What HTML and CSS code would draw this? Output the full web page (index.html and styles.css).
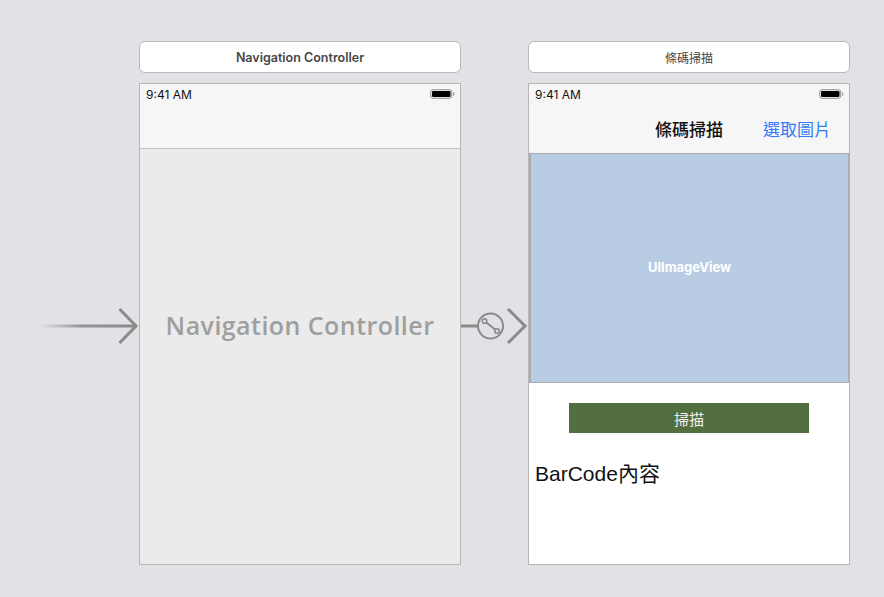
FILE: index.html
```html
<!DOCTYPE html>
<html>
<head>
<meta charset="utf-8">
<link rel="stylesheet" href="styles.css">
</head>
<body>
<div class="canvas">
  <div class="title bold col2">Navigation Controller</div>
  <div class="title col4">條碼掃描</div>

  <svg class="arrow col1" width="139" height="40" viewBox="0 0 139 40">
    <defs>
      <linearGradient id="fade" x1="0" x2="1" y1="0" y2="0">
        <stop offset="0" stop-color="#8a8a8a" stop-opacity="0"/>
        <stop offset="0.45" stop-color="#8a8a8a" stop-opacity="0.9"/>
        <stop offset="1" stop-color="#8a8a8a"/>
      </linearGradient>
    </defs>
    <rect x="40" y="19.5" width="95" height="3" fill="url(#fade)"/>
    <polyline points="119.5,4 136,21 119.5,38" fill="none" stroke="#8a8a8a" stroke-width="3"/>
  </svg>

  <div class="phone nav-phone col2">
    <div class="bar">
      <div class="status">
        <span>9:41 AM</span>
        <svg class="battery" width="25" height="10" viewBox="0 0 25 10"><rect x="0.75" y="0.75" width="21" height="8.5" rx="2.2" fill="none" stroke="#8c8c8c" stroke-width="1"/><rect x="2" y="2" width="18.5" height="6" rx="1.2" fill="#000"/><rect x="23" y="3.5" width="1.2" height="3" fill="#9a9a9a"/></svg>
      </div>
      <div class="navrow"></div>
    </div>
    <div class="nav-body">
      <div class="big-label">Navigation Controller</div>
    </div>
  </div>

  <svg class="arrow col3" width="67" height="40" viewBox="0 0 67 40">
    <line x1="0" y1="21" x2="17" y2="21" stroke="#8a8a8a" stroke-width="3"/>
    <circle cx="29.5" cy="21" r="12.5" fill="none" stroke="#8a8a8a" stroke-width="2"/>
    <line x1="23.5" y1="16" x2="36" y2="26" stroke="#8a8a8a" stroke-width="1.8"/>
    <circle cx="23.5" cy="16" r="2.3" fill="#e1e2e6" stroke="#8a8a8a" stroke-width="1.6"/>
    <circle cx="36" cy="26" r="2.3" fill="#e1e2e6" stroke="#8a8a8a" stroke-width="1.6"/>
    <polyline points="47,4 64,21 47,38" fill="none" stroke="#8a8a8a" stroke-width="3"/>
  </svg>

  <div class="phone scan-phone col4">
    <div class="bar">
      <div class="status">
        <span>9:41 AM</span>
        <svg class="battery" width="25" height="10" viewBox="0 0 25 10"><rect x="0.75" y="0.75" width="21" height="8.5" rx="2.2" fill="none" stroke="#8c8c8c" stroke-width="1"/><rect x="2" y="2" width="18.5" height="6" rx="1.2" fill="#000"/><rect x="23" y="3.5" width="1.2" height="3" fill="#9a9a9a"/></svg>
      </div>
      <div class="navrow scan-nav">
        <span class="nav-title">條碼掃描</span>
        <span class="nav-action">選取圖片</span>
      </div>
    </div>
    <div class="image-view">UIImageView</div>
    <div class="scan-body">
      <div class="scan-btn">掃描</div>
      <div class="barcode">BarCode內容</div>
    </div>
  </div>
</div>
</body>
</html>
```

FILE: styles.css
```css
html, body {
  margin: 0;
  padding: 0;
  background: #e1e2e6;
  font-family: "Inter", "Liberation Sans", "Noto Sans CJK TC", sans-serif;
}

.canvas {
  display: grid;
  grid-template-columns: 139px 322px 67px 322px;
  grid-template-rows: 32px 482px;
  row-gap: 10px;
  padding-top: 41px;
}

.col1 { grid-column: 1; }
.col2 { grid-column: 2; }
.col3 { grid-column: 3; }
.col4 { grid-column: 4; }

.title {
  grid-row: 1;
  box-sizing: border-box;
  background: #ffffff;
  border: 1px solid #b9b9bb;
  border-radius: 6px;
  display: flex;
  align-items: center;
  justify-content: center;
  font-size: 12px;
  color: #444444;
  font-family: "Inter", "Liberation Sans", "Noto Sans CJK TC", sans-serif;
}

.title.bold {
  font-weight: 600;
  font-size: 12.5px;
  color: #474747;
}

.arrow {
  grid-row: 2;
  align-self: center;
  margin-top: 2px;
  display: block;
}

.phone {
  grid-row: 2;
  box-sizing: border-box;
  border: 1px solid #b6b6b6;
  display: flex;
  flex-direction: column;
  overflow: hidden;
}

.nav-phone { background: #ebebeb; }
.scan-phone { background: #ffffff; }

.bar {
  background: #f6f6f6;
  display: flex;
  flex-direction: column;
}

.status {
  height: 20px;
  display: flex;
  align-items: center;
  justify-content: space-between;
  padding: 0 5px 0 6px;
  font-size: 12px;
  color: #111111;
  box-sizing: border-box;
}

.status span {
  padding-top: 1px;
}

.battery { display: block; }

.navrow {
  height: 44px;
}

.nav-phone .bar {
  border-bottom: 1px solid #c2c2c2;
}

.nav-body {
  flex: 1;
  display: flex;
  flex-direction: column;
  align-items: center;
}

.big-label {
  margin-top: 160px;
  font-family: "Open Sans", "Liberation Sans", sans-serif;
  font-weight: 600;
  font-size: 25px;
  letter-spacing: 0.45px;
  line-height: 32px;
  color: #9f9f9f;
}

.scan-nav {
  height: 49px;
  display: flex;
  align-items: center;
  justify-content: flex-end;
  padding-right: 18px;
  gap: 40px;
  font-size: 17px;
  font-family: "Noto Sans CJK TC", sans-serif;
}

.nav-title {
  color: #111111;
  font-weight: 500;
}

.nav-action {
  color: #2f7cf6;
}

.image-view {
  height: 230px;
  box-sizing: border-box;
  background: #b8cce4;
  border: 1px solid #a9abad;
  border-left-width: 2px;
  display: flex;
  align-items: center;
  justify-content: center;
  color: #ffffff;
  font-weight: 700;
  font-size: 13px;
  font-family: "Inter", "Liberation Sans", sans-serif;
  padding-bottom: 3px;
}

.scan-body {
  display: flex;
  flex-direction: column;
}

.scan-btn {
  margin: 20px 0 0 40px;
  width: 240px;
  height: 30px;
  background: #536e3f;
  color: #f2f2f2;
  font-size: 15px;
  display: flex;
  align-items: center;
  justify-content: center;
  font-family: "Noto Sans CJK TC", sans-serif;
}

.barcode {
  margin: 26px 0 0 6px;
  font-size: 21px;
  line-height: 30px;
  color: #111111;
  font-family: "Liberation Sans", "Noto Sans CJK TC", sans-serif;
}
```
